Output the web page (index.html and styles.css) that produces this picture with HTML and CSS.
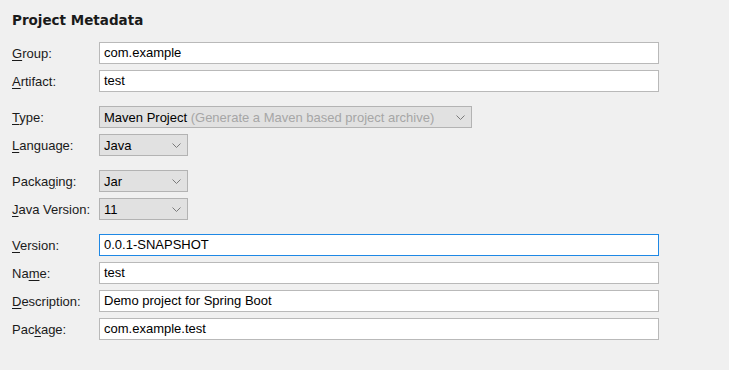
FILE: index.html
```html
<!DOCTYPE html>
<html lang="en">
<head>
    <meta charset="UTF-8">
    <title>Project Metadata</title>
    <link rel="stylesheet" href="styles.css">
</head>
<body>
    <div class="panel">
        <h2 class="title">Project Metadata</h2>

        <div class="group">
            <div class="row">
                <label><u>G</u>roup:</label>
                <div class="field">com.example</div>
            </div>
            <div class="row">
                <label><u>A</u>rtifact:</label>
                <div class="field">test</div>
            </div>
        </div>

        <div class="group">
            <div class="row">
                <label><u>T</u>ype:</label>
                <div class="combo combo-wide">
                    <span>Maven Project <span class="hint">(Generate a Maven based project archive)</span></span>
                    <svg class="chevron" width="9" height="5" viewBox="0 0 9 5"><polyline points="0.5,0.5 4.5,4.5 8.5,0.5" fill="none" stroke="#7a7a7a" stroke-width="1"/></svg>
                </div>
            </div>
            <div class="row">
                <label><u>L</u>anguage:</label>
                <div class="combo">
                    <span>Java</span>
                    <svg class="chevron" width="9" height="5" viewBox="0 0 9 5"><polyline points="0.5,0.5 4.5,4.5 8.5,0.5" fill="none" stroke="#7a7a7a" stroke-width="1"/></svg>
                </div>
            </div>
        </div>

        <div class="group">
            <div class="row">
                <label>Packa<u>g</u>ing:</label>
                <div class="combo">
                    <span>Jar</span>
                    <svg class="chevron" width="9" height="5" viewBox="0 0 9 5"><polyline points="0.5,0.5 4.5,4.5 8.5,0.5" fill="none" stroke="#7a7a7a" stroke-width="1"/></svg>
                </div>
            </div>
            <div class="row">
                <label><u>J</u>ava Version:</label>
                <div class="combo">
                    <span>11</span>
                    <svg class="chevron" width="9" height="5" viewBox="0 0 9 5"><polyline points="0.5,0.5 4.5,4.5 8.5,0.5" fill="none" stroke="#7a7a7a" stroke-width="1"/></svg>
                </div>
            </div>
        </div>

        <div class="group">
            <div class="row">
                <label><u>V</u>ersion:</label>
                <div class="field focused">0.0.1-SNAPSHOT</div>
            </div>
            <div class="row">
                <label>Na<u>m</u>e:</label>
                <div class="field">test</div>
            </div>
            <div class="row">
                <label><u>D</u>escription:</label>
                <div class="field">Demo project for Spring Boot</div>
            </div>
            <div class="row">
                <label>Pac<u>k</u>age:</label>
                <div class="field">com.example.test</div>
            </div>
        </div>
    </div>
</body>
</html>
```

FILE: styles.css
```css
* {
    margin: 0;
    padding: 0;
    box-sizing: border-box;
}

body {
    font-family: 'Liberation Sans', Arial, sans-serif;
    font-size: 13px;
    color: #000;
    background: #f0f0f0;
    width: 729px;
    height: 370px;
    overflow: hidden;
}

.panel {
    padding: 12px 12px 0 12px;
}

.title {
    font-family: 'DejaVu Sans', sans-serif;
    font-size: 13.5px;
    font-weight: bold;
    color: #1a1a1a;
    line-height: 17px;
    margin-bottom: 13px;
}

.group {
    display: flex;
    flex-direction: column;
    gap: 6px;
    margin-bottom: 14px;
}

.row {
    display: grid;
    grid-template-columns: 87px 560px;
    align-items: center;
    height: 22px;
}

label {
    color: #1a1a1a;
}

label u {
    text-underline-offset: 2px;
}

.field {
    height: 22px;
    background: #fff;
    border: 1px solid #b9b9b9;
    padding: 0 4px;
    line-height: 20px;
    white-space: nowrap;
}

.field.focused {
    border-color: #1e88e5;
}

.combo {
    width: 89px;
    height: 22px;
    background: #e1e1e1;
    border: 1px solid #b3b3b3;
    padding: 0 6px 0 4px;
    display: flex;
    align-items: center;
    justify-content: space-between;
    white-space: nowrap;
}

.combo-wide {
    width: 373px;
}

.hint {
    color: #a6a6a6;
}

.chevron {
    flex-shrink: 0;
}
```
